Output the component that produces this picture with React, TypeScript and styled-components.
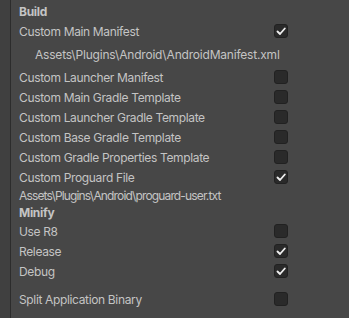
import React from "react";
import styled, { createGlobalStyle } from "styled-components";

const Global = createGlobalStyle`
  html, body { margin: 0; padding: 0; background: #474747; }
  body { font-family: Inter, "Noto Sans", sans-serif; }
`;

const Page = styled.div`
  display: flex;
  width: 349px;
  height: 318px;
  background: #474747;
  overflow: hidden;
`;

const Gutter = styled.div`
  width: 10px;
  background: #404040;
  flex: none;
`;

const Divider = styled.div`
  width: 1px;
  background: #2c2c2c;
  flex: none;
`;

const Content = styled.div`
  flex: 1;
  display: flex;
  flex-direction: column;
  padding: 2px 61px 0 8px;
`;

const Header = styled.div<{ $h: number }>`
  height: ${(p) => p.$h}px;
  display: flex;
  align-items: center;
  font-size: 12px;
  font-weight: 700;
  letter-spacing: -0.3px;
  color: #c4c4c4;
`;

const Row = styled.div<{ $h?: number; $mt?: number }>`
  height: ${(p) => p.$h ?? 20}px;
  margin-top: ${(p) => p.$mt ?? 0}px;
  display: flex;
  align-items: center;
  justify-content: space-between;
  font-size: 12px;
  letter-spacing: -0.35px;
  color: #c4c4c4;
`;

const PathText = styled.div<{ $indent: number; $h: number; $ls: number }>`
  height: ${(p) => p.$h}px;
  display: flex;
  align-items: center;
  padding-left: ${(p) => p.$indent}px;
  font-size: 12px;
  letter-spacing: ${(p) => p.$ls}px;
  color: #c4c4c4;
  white-space: nowrap;
`;

const Box = styled.div`
  width: 12px;
  height: 12px;
  border: 1px solid #212121;
  border-radius: 3px;
  background: #2a2a2a;
  display: flex;
  align-items: center;
  justify-content: center;
  flex: none;
`;

const Check = ({ on }: { on?: boolean }) => (
  <Box>
    {on && (
      <svg width="10" height="10" viewBox="0 0 10 10">
        <polyline
          points="1.5,5.5 4,8 8.8,2.5"
          fill="none"
          stroke="#eeeeee"
          strokeWidth="1.8"
          strokeLinecap="round"
          strokeLinejoin="round"
        />
      </svg>
    )}
  </Box>
);

const Toggle = ({ label, on, h, mt }: { label: string; on?: boolean; h?: number; mt?: number }) => (
  <Row $h={h} $mt={mt}>
    <span>{label}</span>
    <Check on={on} />
  </Row>
);

export default function App() {
  return (
    <>
      <Global />
      <Page>
        <Gutter />
        <Divider />
        <Content>
          <Header $h={19}>Build</Header>
          <Toggle label="Custom Main Manifest" on />
          <PathText $indent={16} $h={26} $ls={-0.2}>Assets\Plugins\Android\AndroidManifest.xml</PathText>
          <Toggle label="Custom Launcher Manifest" />
          <Toggle label="Custom Main Gradle Template" />
          <Toggle label="Custom Launcher Gradle Template" />
          <Toggle label="Custom Base Gradle Template" />
          <Toggle label="Custom Gradle Properties Template" />
          <Toggle label="Custom Proguard File" on />
          <PathText $indent={0} $h={16} $ls={-0.85}>Assets\Plugins\Android\proguard-user.txt</PathText>
          <Header $h={18}>Minify</Header>
          <Toggle label="Use R8" />
          <Toggle label="Release" on />
          <Toggle label="Debug" on />
          <Toggle label="Split Application Binary" mt={8} />
        </Content>
      </Page>
    </>
  );
}
